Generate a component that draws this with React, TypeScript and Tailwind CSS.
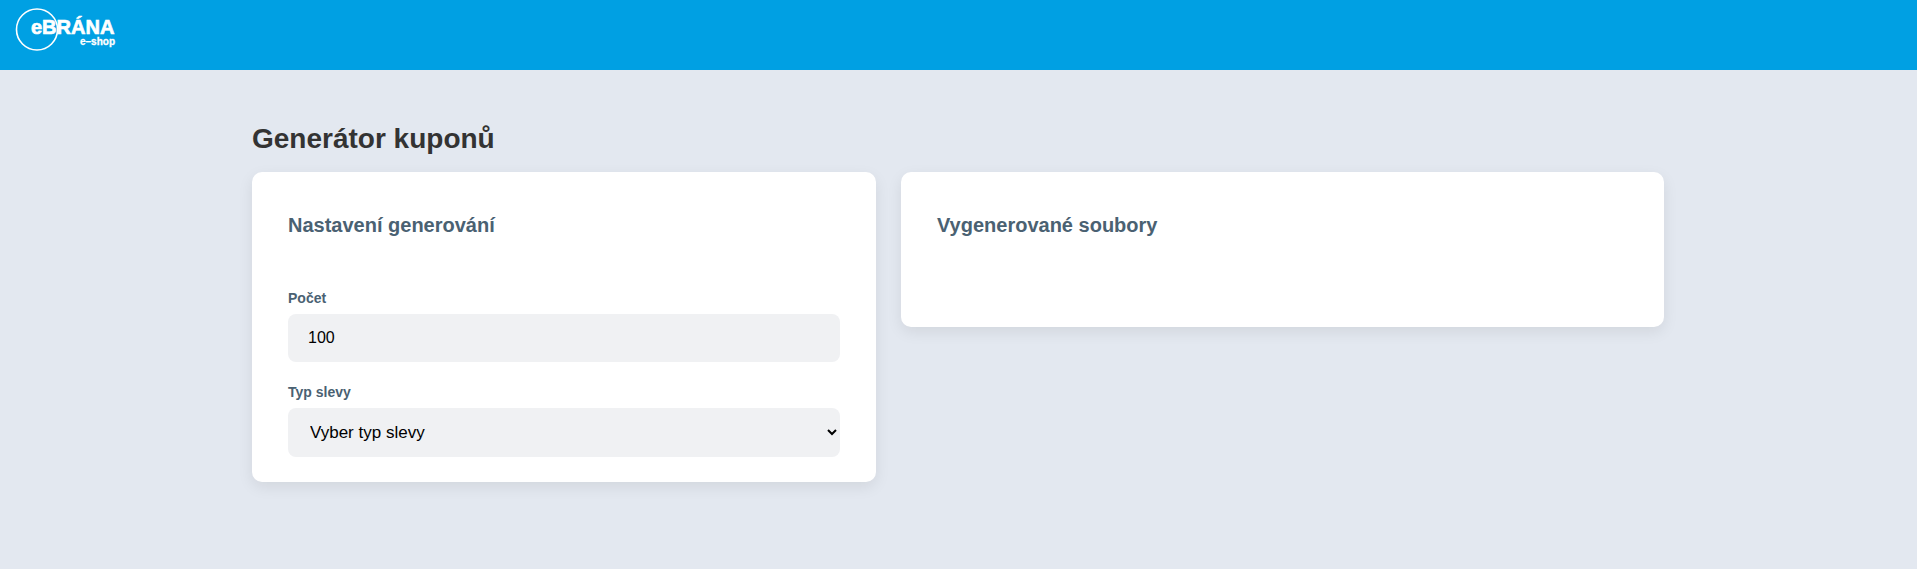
export default function App() {
  return (
    <div className="min-h-[569px] bg-[#e3e8f0] font-['Liberation_Sans',Arial,sans-serif]">
      <header className="relative h-[70px] bg-[#00a0e3]">
        <Logo />
      </header>
      <main className="pl-[252px] pt-[52px]">
        <h1 className="mb-[16px] text-[28px] leading-[34px] font-bold text-[#333333]">Generátor kuponů</h1>
        <div className="flex items-start gap-[25px]">
          <section className="w-[624px] rounded-[10px] bg-white px-[36px] pt-[41px] pb-[25px] shadow-[0_5px_15px_rgba(0,0,0,0.08)]">
            <h2 className="mb-[53px] text-[20px] leading-[24px] font-bold text-[#4a6172]">Nastavení generování</h2>
            <div className="mb-[22px]">
              <label className="mb-[8px] block text-[14px] leading-[16px] font-bold text-[#4a6172]">Počet</label>
              <input
                type="number"
                defaultValue={100}
                className="block h-[48px] w-full rounded-[8px] bg-[#f0f1f3] px-[20px] text-[16px] text-black outline-none"
              />
            </div>
            <div>
              <label className="mb-[8px] block text-[14px] leading-[16px] font-bold text-[#4a6172]">Typ slevy</label>
              <select className="block h-[49px] w-full rounded-[8px] bg-[#f0f1f3] px-[18px] text-[17px] text-black outline-none">
                <option>Vyber typ slevy</option>
              </select>
            </div>
          </section>
          <section className="h-[155px] w-[763px] rounded-[10px] bg-white px-[36px] pt-[41px] shadow-[0_5px_15px_rgba(0,0,0,0.08)]">
            <h2 className="text-[20px] leading-[24px] font-bold text-[#4a6172]">Vygenerované soubory</h2>
          </section>
        </div>
      </main>
    </div>
  );
}

function Logo() {
  return (
    <div className="absolute top-[8px] left-[15px] h-[44px] w-[105px] text-white">
      <svg width="44" height="44" viewBox="0 0 44 44" className="absolute top-0 left-0">
        <circle cx="22" cy="21.5" r="20.5" fill="none" stroke="white" strokeWidth="1.6" />
      </svg>
      <span className="absolute top-[12px] left-[16px] text-[20px] leading-[15px] font-bold whitespace-nowrap [-webkit-text-stroke:0.7px_white]">
        eBRÁNA
      </span>
      <span className="absolute top-[28px] left-[65px] text-[10px] leading-[11px] font-bold whitespace-nowrap [-webkit-text-stroke:0.3px_white]">
        e–shop
      </span>
    </div>
  );
}
